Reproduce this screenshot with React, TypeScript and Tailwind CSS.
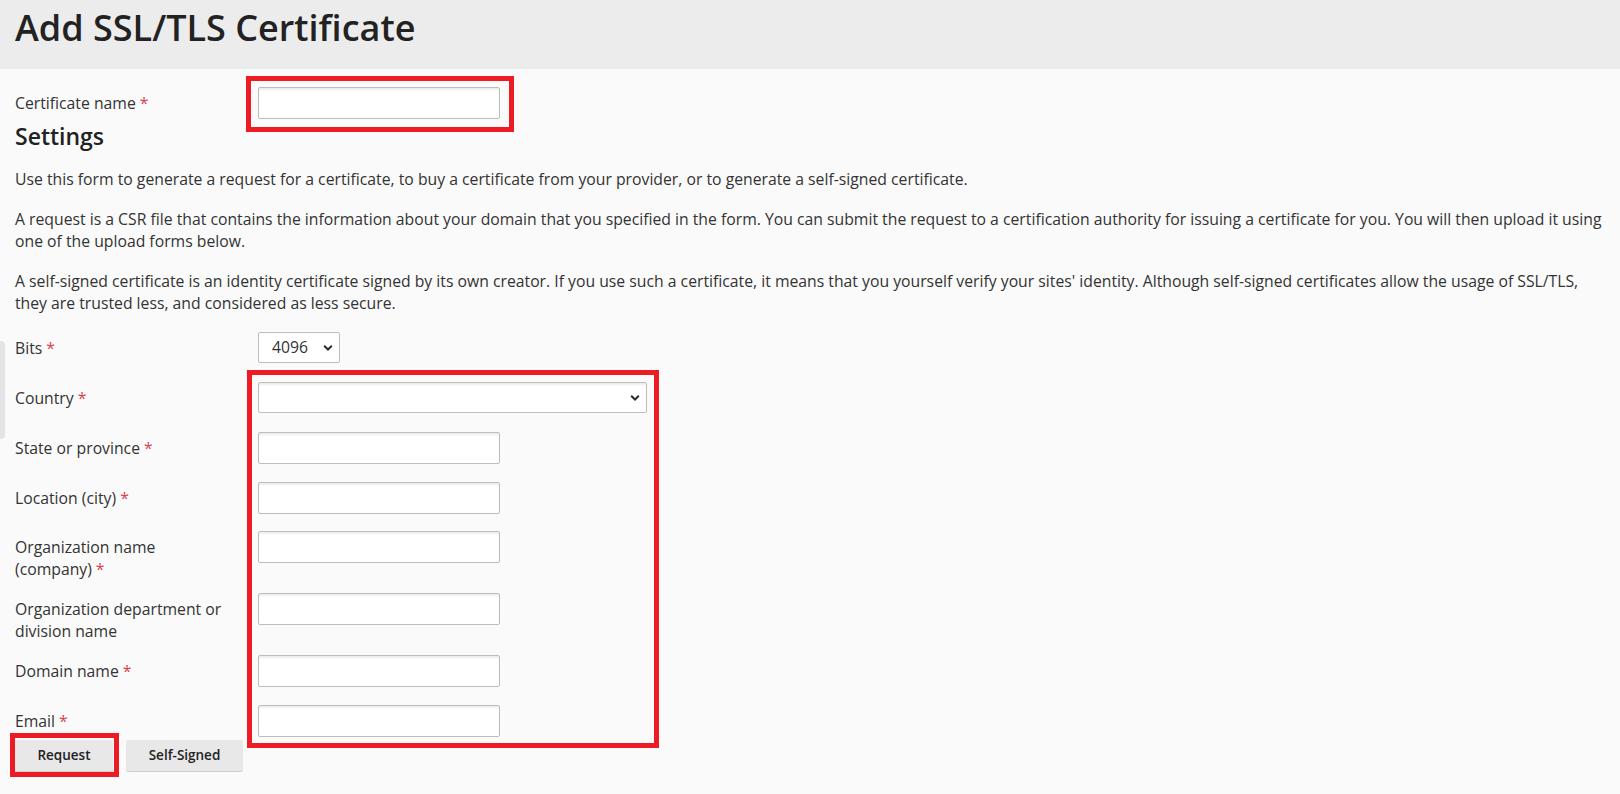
import React from "react";

const Req = () => <span className="text-[#d9434e] ml-[4px]">*</span>;

const inputCls =
  "block h-[32px] w-[242px] rounded-[2px] border border-[#bdbdbd] bg-white shadow-[inset_0_2px_2px_rgba(0,0,0,0.07)] outline-0 px-[8px] text-[15px]";

const Chevron = () => (
  <svg width="10" height="7" viewBox="0 0 10 7" className="absolute right-[7px] top-1/2 -translate-y-1/2 pointer-events-none">
    <path d="M1.2 1.3 L5 5 L8.8 1.3" fill="none" stroke="#2b2b2b" strokeWidth="2" />
  </svg>
);

type RowProps = {
  label: React.ReactNode;
  children: React.ReactNode;
  mb: string;
};

const Row = ({ label, children, mb }: RowProps) => (
  <div className={`flex items-start ${mb}`}>
    <label className="w-[243px] shrink-0 pt-[5px] pr-[20px] leading-[22px]">{label}</label>
    {children}
  </div>
);

export default function App() {
  return (
    <div className="relative min-h-screen bg-[#fafafa] font-['Open_Sans',sans-serif] text-[#333] text-[15.75px]">
      <header className="h-[69px] bg-[#ececec] px-[15px]">
        <h1 className="text-[36px] font-semibold leading-[56px] text-[#222]">Add SSL/TLS Certificate</h1>
      </header>

      <main className="px-[15px] pt-[18px]">
        <div className="flex items-start">
          <label className="w-[243px] shrink-0 pt-[5px] leading-[22px]">
            Certificate name<Req />
          </label>
          <input type="text" className={inputCls} />
        </div>

        <h2 className="mt-[3px] text-[23px] font-semibold leading-[28px] text-[#222]">Settings</h2>

        <div className="leading-[22px]">
          <p className="mt-[18px]">
            Use this form to generate a request for a certificate, to buy a certificate from your provider, or to generate a self-signed certificate.
          </p>
          <p className="mt-[18px]">
            A request is a CSR file that contains the information about your domain that you specified in the form. You can submit the request to a certification authority for issuing a certificate for you. You will then upload it using one of the upload forms below.
          </p>
          <p className="mt-[18px]">
            A self-signed certificate is an identity certificate signed by its own creator. If you use such a certificate, it means that you yourself verify your sites' identity. Although self-signed certificates allow the usage of SSL/TLS, they are trusted less, and considered as less secure.
          </p>
        </div>

        <div className="mt-[18px]">
          <Row mb="mb-[19px]" label={<>Bits<Req /></>}>
            <div className="relative">
              <select defaultValue="4096" className="block h-[31px] w-[82px] appearance-none rounded-[2px] border border-[#bdbdbd] bg-white pl-[13px] text-[15.75px] text-[#333] outline-0">
                <option value="1024">1024</option>
                <option value="2048">2048</option>
                <option value="4096">4096</option>
              </select>
              <Chevron />
            </div>
          </Row>

          <Row mb="mb-[19px]" label={<>Country<Req /></>}>
            <div className="relative">
              <select defaultValue="" className="block h-[31px] w-[389px] appearance-none rounded-[2px] border border-[#bdbdbd] bg-white shadow-[inset_0_2px_2px_rgba(0,0,0,0.07)] outline-0">
                <option value=""></option>
              </select>
              <Chevron />
            </div>
          </Row>

          <Row mb="mb-[17.5px]" label={<>State or province<Req /></>}>
            <input type="text" className={inputCls} />
          </Row>

          <Row mb="mb-[17.5px]" label={<>Location (city)<Req /></>}>
            <input type="text" className={inputCls} />
          </Row>

          <Row mb="mb-[13px]" label={<>Organization name<br />(company)<Req /></>}>
            <input type="text" className={inputCls} />
          </Row>

          <Row mb="mb-[13px]" label={<>Organization department or<br />division name</>}>
            <input type="text" className={inputCls} />
          </Row>

          <Row mb="mb-[17.5px]" label={<>Domain name<Req /></>}>
            <input type="text" className={inputCls} />
          </Row>

          <Row mb="mb-[3.5px]" label={<>Email<Req /></>}>
            <input type="text" className={inputCls} />
          </Row>
        </div>

        <div className="flex gap-[13px]">
          <button type="button" className="h-[31px] w-[98px] rounded-[2px] bg-[#e8e8e8] text-[13.5px] font-semibold text-[#222] shadow-[0_1px_0_#cfcfcf]">
            Request
          </button>
          <button type="button" className="h-[31px] w-[117px] rounded-[2px] bg-[#e8e8e8] text-[13.5px] font-semibold text-[#222] shadow-[0_1px_0_#cfcfcf]">
            Self-Signed
          </button>
        </div>
      </main>

      {/* side tab */}
      <div className="absolute left-0 top-[341px] h-[98px] w-[5px] rounded-r-[4px] bg-[#e4e4e4]" />

      {/* red highlight boxes */}
      <div className="absolute left-[246px] top-[76px] h-[56px] w-[268px] border-[5px] border-[#ed1c24]" />
      <div className="absolute left-[247px] top-[370px] h-[378px] w-[412px] border-[5px] border-[#ed1c24]" />
      <div className="absolute left-[10px] top-[733px] h-[44px] w-[109px] border-[5px] border-[#ed1c24]" />
    </div>
  );
}
